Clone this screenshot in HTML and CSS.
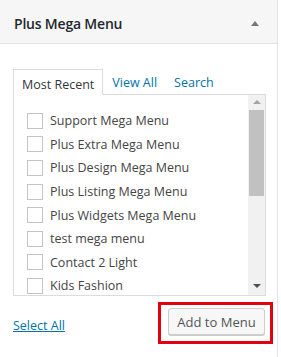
FILE: index.html
```html
<!DOCTYPE html>
<html>

<head>
    <title>Plus Mega Menu</title>
    <link rel="stylesheet" href="styles.css">
</head>

<body>
    <div class="box">
        <div class="box-head">
            <h3>Plus Mega Menu</h3>
            <span class="toggle"></span>
        </div>
        <div class="box-body">
            <ul class="tabs">
                <li class="active">Most Recent</li>
                <li><a href="#">View All</a></li>
                <li><a href="#">Search</a></li>
            </ul>
            <div class="panel">
                <ul class="items">
                    <li><span class="check"></span>Support Mega Menu</li>
                    <li><span class="check"></span>Plus Extra Mega Menu</li>
                    <li><span class="check"></span>Plus Design Mega Menu</li>
                    <li><span class="check"></span>Plus Listing Mega Menu</li>
                    <li><span class="check"></span>Plus Widgets Mega Menu</li>
                    <li><span class="check"></span>test mega menu</li>
                    <li><span class="check"></span>Contact 2 Light</li>
                    <li><span class="check"></span>Kids Fashion</li>
                </ul>
                <div class="scrollbar">
                    <span class="arrow up"></span>
                    <span class="thumb"></span>
                    <span class="arrow down"></span>
                </div>
            </div>
            <div class="actions">
                <a href="#" class="select-all">Select All</a>
                <div class="highlight">
                    <button>Add to Menu</button>
                </div>
            </div>
        </div>
    </div>
</body>

</html>
```

FILE: styles.css
```css
/* menu metabox */
body {
    margin: 0;
    font-family: "Open Sans", "Noto Sans", sans-serif;
    font-size: 12.5px;
    color: #444;
    background-color: #fff;
}

.box {
    width: 277px;
    height: 357px;
    border-right: 1px solid #e5e5e5;
}

.box-head {
    display: flex;
    align-items: center;
    justify-content: space-between;
    padding: 3px 18px 0 14px;
    box-sizing: border-box;
    height: 44px;
    background-color: #f6f6f6;
    border-bottom: 1px solid #e2e2e2;
}

.box-head h3 {
    margin: 0;
    font-size: 14px;
    font-weight: 600;
    color: #23282d;
    letter-spacing: -0.2px;
}

.toggle {
    width: 0;
    height: 0;
    border-left: 4px solid transparent;
    border-right: 4px solid transparent;
    border-bottom: 5px solid #777;
}

.box-body {
    padding: 24px 4px 0 13px;
}

.tabs {
    list-style: none;
    margin: 0;
    padding: 0;
    display: flex;
    height: 26px;
}

.tabs li {
    padding: 5px 8px 0 9px;
    line-height: 20px;
}

.tabs li.active {
    border: 1px solid #dcdcdc;
    border-bottom: none;
    background-color: #fff;
    color: #32373c;
    position: relative;
    top: 1px;
    padding: 5px 8px 0 8px;
}

.tabs a {
    color: #0073aa;
    text-decoration: none;
}

.panel {
    display: flex;
    height: 200px;
    margin-right: 7px;
    border: 1px solid #dcdcdc;
    overflow: hidden;
}

.items {
    flex: 1;
    list-style: none;
    margin: 0;
    padding: 14px 0 0 13px;
}

.items li {
    display: flex;
    align-items: center;
    height: 23.6px;
    color: #444;
}

.check {
    width: 14px;
    height: 14px;
    border: 1px solid #c4c4c4;
    margin-right: 7px;
    background-color: #fff;
}

.scrollbar {
    width: 17px;
    display: flex;
    flex-direction: column;
    align-items: center;
    background-color: #f1f1f1;
}

.arrow {
    width: 0;
    height: 0;
    border-left: 4px solid transparent;
    border-right: 4px solid transparent;
}

.arrow.up {
    margin: 5px 0 6px;
    border-bottom: 4px solid #a3a3a3;
}

.arrow.down {
    margin-top: auto;
    margin-bottom: 7px;
    border-top: 4px solid #505050;
}

.thumb {
    width: 15px;
    height: 86px;
    background-color: #c1c1c1;
}

.actions {
    display: flex;
    align-items: center;
    justify-content: space-between;
    margin-top: 6px;
}

.select-all {
    color: #0073aa;
    text-decoration: underline;
    margin-top: 4px;
}

.highlight {
    border: 3px solid #e3000f;
    padding: 3px 5px 6px 7px;
}

.highlight button {
    display: block;
    width: 97px;
    height: 27px;
    font-family: "Open Sans", "Noto Sans", sans-serif;
    font-size: 13px;
    color: #555;
    background-color: #f7f7f7;
    border: 1px solid #ccc;
    border-radius: 3px;
    box-shadow: 0 1px 0 #ccc;
    padding: 0;
}
```
